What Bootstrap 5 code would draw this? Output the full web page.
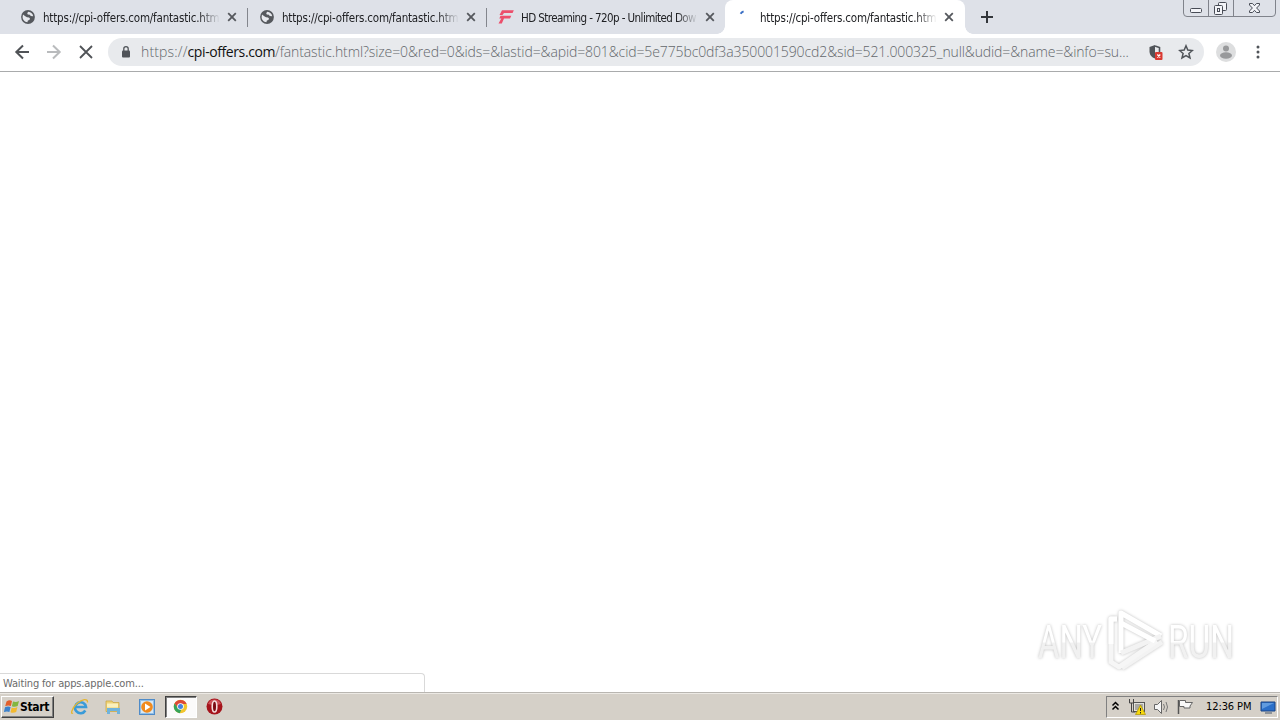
<!DOCTYPE html>
<html lang="en">
<head>
<meta charset="utf-8">
<title>cpi-offers.com</title>
<link href="https://cdn.jsdelivr.net/npm/bootstrap@5.3.0/dist/css/bootstrap.min.css" rel="stylesheet">
<style>
body{width:1280px;height:720px;font-family:"DejaVu Sans Condensed","DejaVu Sans",sans-serif;font-size:11px;line-height:14px;color:#202124;background:#fff}
svg{display:block;flex:none}
.strip{height:34px;background:#dee1e8;padding-left:8px}
.tab{width:239px;height:34px;padding-left:13px}
.tab .fav{width:14px;margin-right:8px}
.tab .title{width:177px;font-size:11.5px;line-height:16px;padding-top:1px;white-space:nowrap;-webkit-mask-image:linear-gradient(90deg,#000 88%,transparent);mask-image:linear-gradient(90deg,#000 88%,transparent)}
.t-url{letter-spacing:-.2px}
.t-hd{letter-spacing:-.58px}
.tab .cross{margin-left:7px}
.sep::after{content:"";position:absolute;right:-1px;top:8px;width:1px;height:19px;background:#83868d}
.live{background:#fff;border-radius:8px 8px 0 0;width:240px}
.live::before,.live::after{content:"";position:absolute;bottom:0;width:8px;height:8px}
.live::before{left:-8px;background:radial-gradient(circle at 0 0,transparent 7.5px,#fff 8px)}
.live::after{right:-8px;background:radial-gradient(circle at 100% 0,transparent 7.5px,#fff 8px)}
.toolbar{height:38px;border-bottom:1px solid #a9abac;padding-bottom:1px}
.omni{width:1096px;height:28px;border-radius:14px;background:#e8eaed;margin-left:14px;padding-left:12px}
.url{width:991px;margin-left:9px;font:300 14px/20px "Open Sans","Noto Sans",sans-serif;color:#63676b;white-space:nowrap}
.url span{display:inline-block}
.scheme{letter-spacing:.15px}
.host{color:#111;font-weight:400;letter-spacing:-.41px}
.rest{letter-spacing:-.11px}
.winbtns{right:3px;top:0}
.status{left:0;bottom:28px;width:425px;height:19px;border:1px solid #d9d9d9;border-left:0;border-bottom:0;border-radius:0 4px 0 0;padding:3px 0 0 3px;color:#6b6b6b;background:#fff}
.t-wait{letter-spacing:-.15px}
.taskbar{height:28px;background:#d5d0c8;border-top:1px solid #b9b6b1;box-shadow:inset 0 1px #ece9e4}
.start{width:53px;height:22px;margin-left:1px;border:1px solid;border-color:#fff #404040 #404040 #fff;box-shadow:inset -1px -1px #808080;background:#d5d0c8;padding-left:2px}
.start b{font-size:12px;color:#000;width:30px;letter-spacing:-.3px}
.running{width:32px;height:22px;border:1px solid;border-color:#404040 #fff #fff #404040;box-shadow:inset 1px 1px #808080;background:#fbfafa}
.tray{width:172px;height:22px;margin-right:2px;border:1px solid;border-color:#808080 #fff #fff #808080;color:#000}
.t-clock{margin-left:5px;width:49px;white-space:nowrap;letter-spacing:-.1px;padding-top:1px}
.mark-any{left:1030px;top:600px;filter:drop-shadow(0 0 1.500px rgba(0,0,0,.26))}
</style>
</head>
<body class="position-relative overflow-hidden d-flex flex-column">
<svg width="0" height="0" class="position-absolute">
<defs>
<symbol id="globe" viewBox="0 0 14 14"><circle cx="7" cy="7" r="6.9" fill="#55585d"/><path d="M2 4.600 4.300 6.200l1.700 1 2 .2 1 1.100-.6 1.400-1.500.5L6.400 12.200C3.700 12 1.600 9.600 1.600 7zM7.200 1.700 6.200 3.300l.6 1.200 2.100.3.8 1.200 2.500.2C12 3.800 10 1.800 7.200 1.700z" fill="#e6e8ed"/></symbol>
<symbol id="x" viewBox="0 0 10 10"><path d="m1.200 1.200 7.600 7.600m0-7.600L1.200 8.800" stroke="#55585d" stroke-width="1.800"/></symbol>
</defs>
</svg>

<div class="strip d-flex align-items-center position-relative">
  <div class="tab sep position-relative d-flex align-items-center"><svg class="fav" height="14"><use href="#globe"/></svg><div class="title overflow-hidden"><span class="t-url">https://cpi-offers.com/fantastic.html</span></div><svg class="cross" width="10" height="10"><use href="#x"/></svg></div>
  <div class="tab sep position-relative d-flex align-items-center"><svg class="fav" height="14"><use href="#globe"/></svg><div class="title overflow-hidden"><span class="t-url">https://cpi-offers.com/fantastic.html</span></div><svg class="cross" width="10" height="10"><use href="#x"/></svg></div>
  <div class="tab position-relative d-flex align-items-center"><svg class="fav" height="14" viewBox="0 0 14 14" overflow="visible"><path d="M3 .3h11.800l-1.200 2.700H5L3.500 5H.5zM1.500 5.800h10.800l-1.300 2.600H5L2.800 13.500H-.5L2.300 8.400H.3z" fill="#ec4f6c"/></svg><div class="title overflow-hidden"><span class="t-hd">HD Streaming - 720p - Unlimited Dow</span></div><svg class="cross" width="10" height="10"><use href="#x"/></svg></div>
  <div class="tab live position-relative d-flex align-items-center"><svg class="fav" height="14" viewBox="0 0 14 14"><path d="M2.600 3.800Q3.800 2 5.600 1.400" fill="none" stroke="#3a6fc4" stroke-width="2"/></svg><div class="title overflow-hidden"><span class="t-url">https://cpi-offers.com/fantastic.html</span></div><svg class="cross" width="10" height="10"><use href="#x"/></svg></div>
  <svg width="12" height="12" class="ms-3"><path d="M6 0v12M0 6h12" stroke="#33363b" stroke-width="2"/></svg>
  <svg class="winbtns position-absolute" width="94" height="18" fill="none" stroke="#80838b"><path d="M.5 0v13q0 3.500 3.500 3.500h85q3.500 0 3.500-3.500V0M25.500 0v16M50.500 0v16"/><g stroke="#484c56"><rect x="7.500" y="8.500" width="11" height="4" rx="1" fill="#f3f4f8"/><rect x="35.500" y="2.500" width="8" height="8" rx="1" fill="#f3f4f8"/><rect x="31.500" y="5.500" width="8" height="9" rx="1" fill="#f3f4f8"/><rect x="34.500" y="8.500" width="2" height="3"/><path d="M66.500 3.500h3l2 2.200 2-2.200h3v1.500L73.600 8l2.900 3v1.500h-3l-2-2.200-2 2.200h-3V11l2.900-3-2.900-3z" fill="#f3f4f8"/></g></svg>
</div>

<div class="toolbar d-flex align-items-center">
  <svg width="94" height="36" fill="none" stroke-width="2"><path d="M29 18H16.500m6.500-6.500L16.300 18l6.700 6.500" stroke="#505357"/><path d="M47 18h12.500M53 11.500l6.700 6.500-6.700 6.500" stroke="#b9bbbd"/><path d="m80 12 12 12m0-12L80 24" stroke="#505357" stroke-width="1.800"/></svg>
  <div class="omni d-flex align-items-center">
    <svg width="12" height="14"><rect x="2" y="5.500" width="8" height="7" rx="1" fill="#505459"/><path d="M3.800 6V3.800a2.200 2.200 0 0 1 4.400 0V6" fill="none" stroke="#505459" stroke-width="1.300"/></svg>
    <div class="url"><span class="scheme">https://</span><span class="host">cpi-offers.com</span><span class="rest">/fantastic.html?size=0&amp;red=0&amp;ids=&amp;lastid=&amp;apid=801&amp;cid=5e775bc0df3a350001590cd2&amp;sid=521.000325_null&amp;udid=&amp;name=&amp;info=su...</span></div>
    <svg width="16" height="16" class="ms-3"><path d="M7 1 1.500 3v4.300C1.500 11 3.800 13.500 7 14.500z" fill="#505459"/><path d="M7 2l4.500 1.500V8M7 14l1-.5" fill="none" stroke="#505459" stroke-width="1.600"/><rect x="7" y="8" width="7.500" height="8" rx="1" fill="#d93a32"/><path d="m9.300 10.500 3 3m0-3-3 3" stroke="#fff" stroke-width="1.300"/></svg>
    <svg width="16" height="16" style="margin-left:14px"><path d="m8 1.800 1.800 4.300 4.600.4-3.500 3 1.100 4.500-4-2.400L4 14l1.100-4.500-3.500-3 4.600-.4z" fill="none" stroke="#505459" stroke-width="1.500"/></svg>
  </div>
  <svg width="20" height="20" style="margin-left:12px"><circle cx="10" cy="10" r="10" fill="#dddedf"/><circle cx="10" cy="6.500" r="3" fill="#98999b"/><ellipse cx="10" cy="13.500" rx="6" ry="3.300" fill="#98999b"/></svg>
  <svg width="4" height="16" style="margin-left:20px" fill="#505459"><circle cx="2" cy="3" r="1.500"/><circle cx="2" cy="8" r="1.500"/><circle cx="2" cy="13" r="1.500"/></svg>
</div>

<main class="flex-grow-1 bg-white"></main>

<svg class="mark-any position-absolute" width="225" height="85">
  <defs><linearGradient id="fade" x1="0" y1="0" x2="0" y2="1"><stop offset=".5" stop-color="#fff"/><stop offset=".52" stop-color="#f1f1f1"/></linearGradient></defs>
  <g font-family="Roboto" font-weight="400" font-size="46" fill="url(#fade)">
    <text x="8" y="58" textLength="64" lengthAdjust="spacingAndGlyphs">ANY</text><text x="138" y="58" textLength="66" lengthAdjust="spacingAndGlyphs">RUN</text>
  </g>
  <g fill="none" stroke="#fff" stroke-width="5" stroke-linejoin="round"><path d="M91 53V13l40 23"/><path d="M91 53 131 36M92 68l40-26" stroke="#f3f3f3"/><path d="M87 19h-6v43l8 5 38-26" stroke="#f6f6f6"/><path d="M91 23l34 18M81 44V19h6"/></g>
</svg>

<div class="status position-absolute"><span class="t-wait">Waiting for apps.apple.com...</span></div>

<div class="taskbar d-flex align-items-center">
  <div class="start d-flex align-items-center"><svg width="16" height="16"><path d="M2.500 2.500q3-2 5.500-.5L6.900 7Q4 6 1.200 7.300z" fill="#e3602c"/><path d="M9 2.500q3 1.200 6-.5l-1.300 5Q11 8.500 7.900 7.300z" fill="#84b640"/><path d="M1 8.300q3-1.500 5.600-.2L5.400 13Q2.800 12-.2 13.200z" fill="#3d82cc"/><path d="M7.700 8.500q3 1.200 5.700-.4L12.200 13q-3 1.500-5.700.3z" fill="#f3b92f"/></svg><b>Start</b></div>
  <svg width="18" height="18" style="margin-left:17px"><path d="M14.300 12.500a5.500 5.500 0 1 1 .7-3.500H5" fill="none" stroke="#3a9bd8" stroke-width="2.600"/><path d="M2 15C-1 17 1 10 6 5.500S17 0 16.500 4.500" fill="none" stroke="#e5b631" stroke-width="1.300"/></svg>
  <svg width="18" height="18" style="margin-left:15px"><path d="M2 3h6l1 1.500h6v9H2z" fill="#eed277" stroke="#c9a43c" stroke-width=".7"/><path d="M3 5.500h11v4H3z" fill="#faf0bc"/><path d="M3 16v-6h13v6h-3v-3H6v3z" fill="#70b3dc"/></svg>
  <svg width="18" height="18" style="margin-left:16px"><rect x="1.500" y="1.500" width="15" height="15" fill="#91bfe7" stroke="#4f8bc8"/><rect x="3" y="3" width="12" height="12" fill="#d6e8f6"/><circle cx="9" cy="9" r="5.800" fill="#f08a1d"/><path d="M7 5.500v7L12.500 9z" fill="#fff"/></svg>
  <div class="running d-flex align-items-center" style="margin-left:9px"><svg width="15" height="15" style="margin-left:7px"><circle cx="7.500" cy="7.500" r="6.700" fill="#f2c52d"/><path d="M1.500 4.500A6.700 6.700 0 0 1 13.600 5H7.500L5 9z" fill="#dc4937"/><path d="M1.500 4.500 5.300 9.500l3 1L6.800 14.200A6.700 6.700 0 0 1 1.500 4.500z" fill="#36a35a"/><circle cx="7.500" cy="7.500" r="3.300" fill="#fff"/><circle cx="7.500" cy="7.500" r="2.500" fill="#4584df"/></svg></div>
  <svg width="17" height="17" style="margin-left:9px"><circle cx="8.500" cy="8.500" r="8" fill="#a5141c"/><path d="M2 6a7 7 0 0 1 13 0q-6 2-13 0" fill="#cf5057"/><ellipse cx="8.500" cy="8.500" rx="2.300" ry="5.500" fill="#7c0b12" stroke="#f5dfdf" stroke-width="1.600"/></svg>
  <div class="tray d-flex align-items-center ms-auto">
    <svg width="94" height="18" fill="none"><path d="m5.500 7 3-3 3 3m-6 4 3-3 3 3" transform="translate(0 .5)" stroke="#000" stroke-width="1.500"/><g><rect x="26.500" y="4.500" width="11" height="9" fill="#e2e2dc" stroke="#555"/><path d="M28 6h8v6h-8z" fill="#aaa9a4"/><path d="M22.500 1v4h4V1m-2 4v9h4" stroke="#444"/><path d="m33.500 7 5 9.500h-10z" fill="#f6d80c" stroke="#ad9200" stroke-width=".7"/><path d="M33.500 10v3m0 1v1.500" stroke="#222"/></g><path d="M47.500 6.500h3l4-4v13l-4-4h-3z" fill="#f5f5f5" stroke="#666"/><path d="M56.500 6q2 3 0 6m2.500-8q3 5 0 10" stroke="#777"/><path d="M71.500 2v14" stroke="#555" stroke-width="1.500"/><path d="M72.500 2.500h6v2h7l-2.500 3.500v2h-6v-1.500h-4.500z" fill="#f8f8f8" stroke="#666"/></svg>
    <span class="t-clock">12:36 PM</span>
    <svg width="16" height="14" style="margin-left:5px"><path d="M1 2h14v9H1z" fill="#2a6fc9" stroke="#1b4584"/><path d="M2 3h12l-12 6z" fill="#609bdf"/><path d="M5 13h7" stroke="#47566a"/></svg>
  </div>
</div>
<script src="https://cdn.jsdelivr.net/npm/bootstrap@5.3.0/dist/js/bootstrap.bundle.min.js"></script>
</body>
</html>
